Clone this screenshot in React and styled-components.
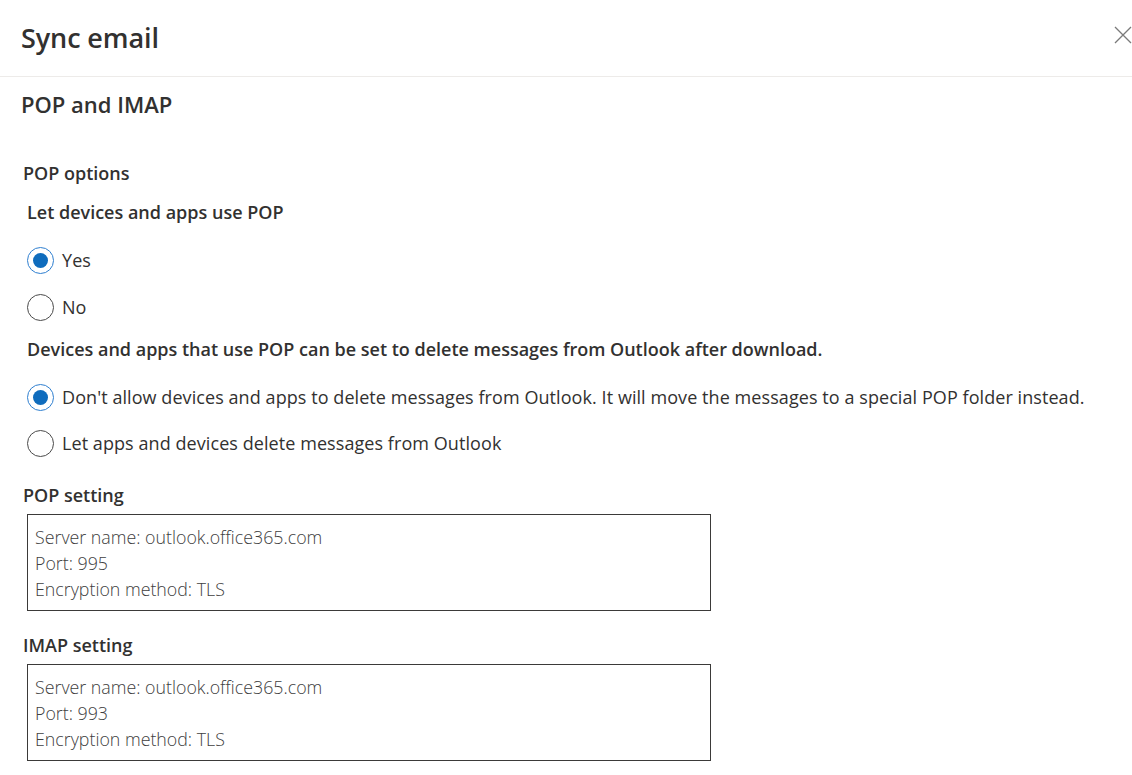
import React from "react";
import styled, { createGlobalStyle } from "styled-components";

const GlobalStyle = createGlobalStyle`
  html, body {
    margin: 0;
    padding: 0;
    background: #ffffff;
  }
  body {
    font-family: "Open Sans", "Noto Sans", "Liberation Sans", sans-serif;
    color: #323130;
  }
`;

const Panel = styled.div`
  width: 1132px;
  height: 775px;
  overflow: hidden;
  background: #ffffff;
`;

const Header = styled.header`
  height: 76px;
  border-bottom: 1px solid #edebe9;
  display: flex;
  align-items: center;
  justify-content: space-between;
  padding: 0 0 0 21px;
`;

const Title = styled.h1`
  margin: 0;
  font-size: 27px;
  font-weight: 600;
  line-height: 36px;
  color: #323130;
  letter-spacing: -0.1px;
`;

const CloseButton = styled.button`
  border: none;
  background: none;
  padding: 0;
  width: 40px;
  height: 40px;
  margin-top: -7px;
  display: flex;
  align-items: center;
  justify-content: flex-end;
  color: #7a7a7a;
  cursor: pointer;
`;

const Body = styled.div`
  padding: 13px 0 0 21px;
`;

const SectionTitle = styled.h2`
  margin: 0;
  font-size: 22px;
  font-weight: 600;
  line-height: 28px;
  color: #323130;
`;

const GroupLabel = styled.div`
  margin: ${(p) => p.$mt}px 0 0 ${(p) => p.$ml}px;
  font-size: 18px;
  font-weight: 600;
  line-height: 24px;
  color: #323130;
`;

const RadioList = styled.div`
  display: flex;
  flex-direction: column;
  gap: ${(p) => p.$gap}px;
  margin: ${(p) => p.$mt}px 0 0 6px;
`;

const RadioRow = styled.label`
  display: flex;
  align-items: center;
  height: 32px;
  gap: 8px;
  font-size: 18px;
  letter-spacing: 0.07px;
  color: #323130;
  cursor: pointer;
`;

const RadioCircle = styled.span`
  box-sizing: border-box;
  width: 27px;
  height: 27px;
  border-radius: 50%;
  border: 1px solid ${(p) => (p.$checked ? "#2f7fd0" : "#4a4a4a")};
  display: flex;
  align-items: center;
  justify-content: center;
  flex-shrink: 0;

  &::after {
    content: "";
    width: 15px;
    height: 15px;
    border-radius: 50%;
    background: #0f6cbd;
    display: ${(p) => (p.$checked ? "block" : "none")};
  }
`;

const SettingBox = styled.div`
  box-sizing: border-box;
  width: 684px;
  height: 97px;
  margin: ${(p) => p.$mt}px 0 0 6px;
  border: 1px solid #3b3a39;
  padding: 9px 7px 0;
  font-size: 17.8px;
  line-height: 26px;
  font-weight: 300;
  color: #404040;
`;

const Radio = ({ checked, children }) => (
  <RadioRow>
    <RadioCircle $checked={checked} />
    {children}
  </RadioRow>
);

const Setting = ({ label, port, mt }) => (
  <>
    <GroupLabel $mt={mt} $ml={2}>
      {label}
    </GroupLabel>
    <SettingBox $mt={7}>
      <div>Server name: outlook.office365.com</div>
      <div>Port: {port}</div>
      <div>Encryption method: TLS</div>
    </SettingBox>
  </>
);

export default function App() {
  return (
    <Panel>
      <GlobalStyle />
      <Header>
        <Title>Sync email</Title>
        <CloseButton aria-label="Close">
          <svg width="18" height="18" viewBox="0 0 18 18">
            <path
              d="M1 1 L17 17 M17 1 L1 17"
              stroke="currentColor"
              strokeWidth="1.3"
              fill="none"
            />
          </svg>
        </CloseButton>
      </Header>
      <Body>
        <SectionTitle>POP and IMAP</SectionTitle>
        <GroupLabel $mt={43} $ml={2}>
          POP options
        </GroupLabel>
        <GroupLabel $mt={15} $ml={6}>
          Let devices and apps use POP
        </GroupLabel>
        <RadioList $mt={20} $gap={15}>
          <Radio checked>Yes</Radio>
          <Radio>No</Radio>
        </RadioList>
        <GroupLabel $mt={14} $ml={6}>
          Devices and apps that use POP can be set to delete messages from
          Outlook after download.
        </GroupLabel>
        <RadioList $mt={20} $gap={14}>
          <Radio checked>
            Don't allow devices and apps to delete messages from Outlook. It
            will move the messages to a special POP folder instead.
          </Radio>
          <Radio>Let apps and devices delete messages from Outlook</Radio>
        </RadioList>
        <Setting label="POP setting" port="995" mt={24} />
        <Setting label="IMAP setting" port="993" mt={22} />
      </Body>
    </Panel>
  );
}
